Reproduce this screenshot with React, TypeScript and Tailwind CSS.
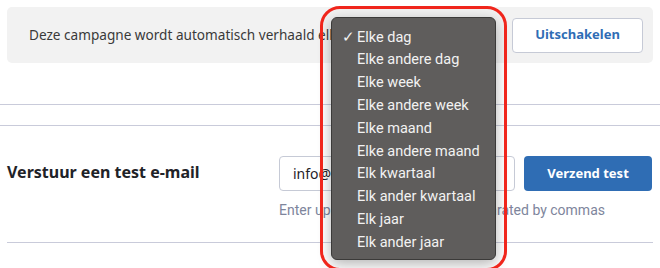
import React from "react";

const OPTIONS = [
  "Elke dag",
  "Elke andere dag",
  "Elke week",
  "Elke andere week",
  "Elke maand",
  "Elke andere maand",
  "Elk kwartaal",
  "Elk ander kwartaal",
  "Elk jaar",
  "Elk ander jaar",
];

function FrequencyMenu({ selected }: { selected: string }) {
  return (
    <div className="absolute left-[331px] top-[17px] w-[165px]">
      <div className="rounded-[6px] border border-[#3b3a39] bg-[#5f5d5c] pt-[8px] pb-[5px] shadow-[0_4px_14px_rgba(0,0,0,0.3)] font-['Roboto',sans-serif] text-[14.5px] text-[#f2f2f2]">
        {OPTIONS.map((o) => (
          <div key={o} className="flex h-[22.8px] items-center">
            <span className="w-[25px] pl-[10px] text-[15px] leading-none">{o === selected ? "✓" : ""}</span>
            <span>{o}</span>
          </div>
        ))}
      </div>
      {/* highlight ring around the open menu */}
      <div className="pointer-events-none absolute -inset-[11px] rounded-[20px] border-[3px] border-[#f0261c]" />
    </div>
  );
}

export default function App() {
  return (
    <div className="relative h-[268px] w-[660px] overflow-hidden bg-white font-['Noto_Sans',sans-serif]">
      <div className="px-[7px] pt-[7px]">
        <div className="flex h-[56px] items-center justify-between rounded-[5px] bg-[#f2f2f2] pl-[22px] pr-[10px]">
          <p className="text-[13.6px] text-[#3a3a3a]">
            Deze campagne wordt automatisch verhaald elke dag
          </p>
          <button className="h-[35px] w-[131px] rounded-[4px] border border-[#c6cad6] bg-white text-[13px] font-bold text-[#2f6db5]">
            Uitschakelen
          </button>
        </div>
      </div>

      <div className="mt-[41px] border-t border-[#c9cbda]" />
      <div className="mt-[20px] border-t border-[#c9cbda]" />

      <div className="px-[7px]">
        <div className="flex pt-[30px]">
          <h3 className="w-[272px] pt-[4px] text-[16px] font-bold text-[#1f2328]">
            Verstuur een test e-mail
          </h3>
          <div>
            <div className="flex gap-[9px]">
              <input
                readOnly
                value="info@voorbeeld.nl"
                className="h-[35px] w-[236px] rounded-[4px] border border-[#c6cad6] px-[13px] text-[14px] text-[#1f2328] outline-none"
              />
              <button className="h-[35px] w-[128px] rounded-[4px] bg-[#2f6db4] text-[13px] font-bold text-white">
                Verzend test
              </button>
            </div>
            <p className="mt-[9px] font-['Roboto',sans-serif] text-[14px] text-[#7e859c]">
              Enter up to 5 email addresses separated by commas
            </p>
          </div>
        </div>
        <div className="mt-[21px] border-t border-[#c9cbda]" />
      </div>

      <FrequencyMenu selected="Elke dag" />
    </div>
  );
}
